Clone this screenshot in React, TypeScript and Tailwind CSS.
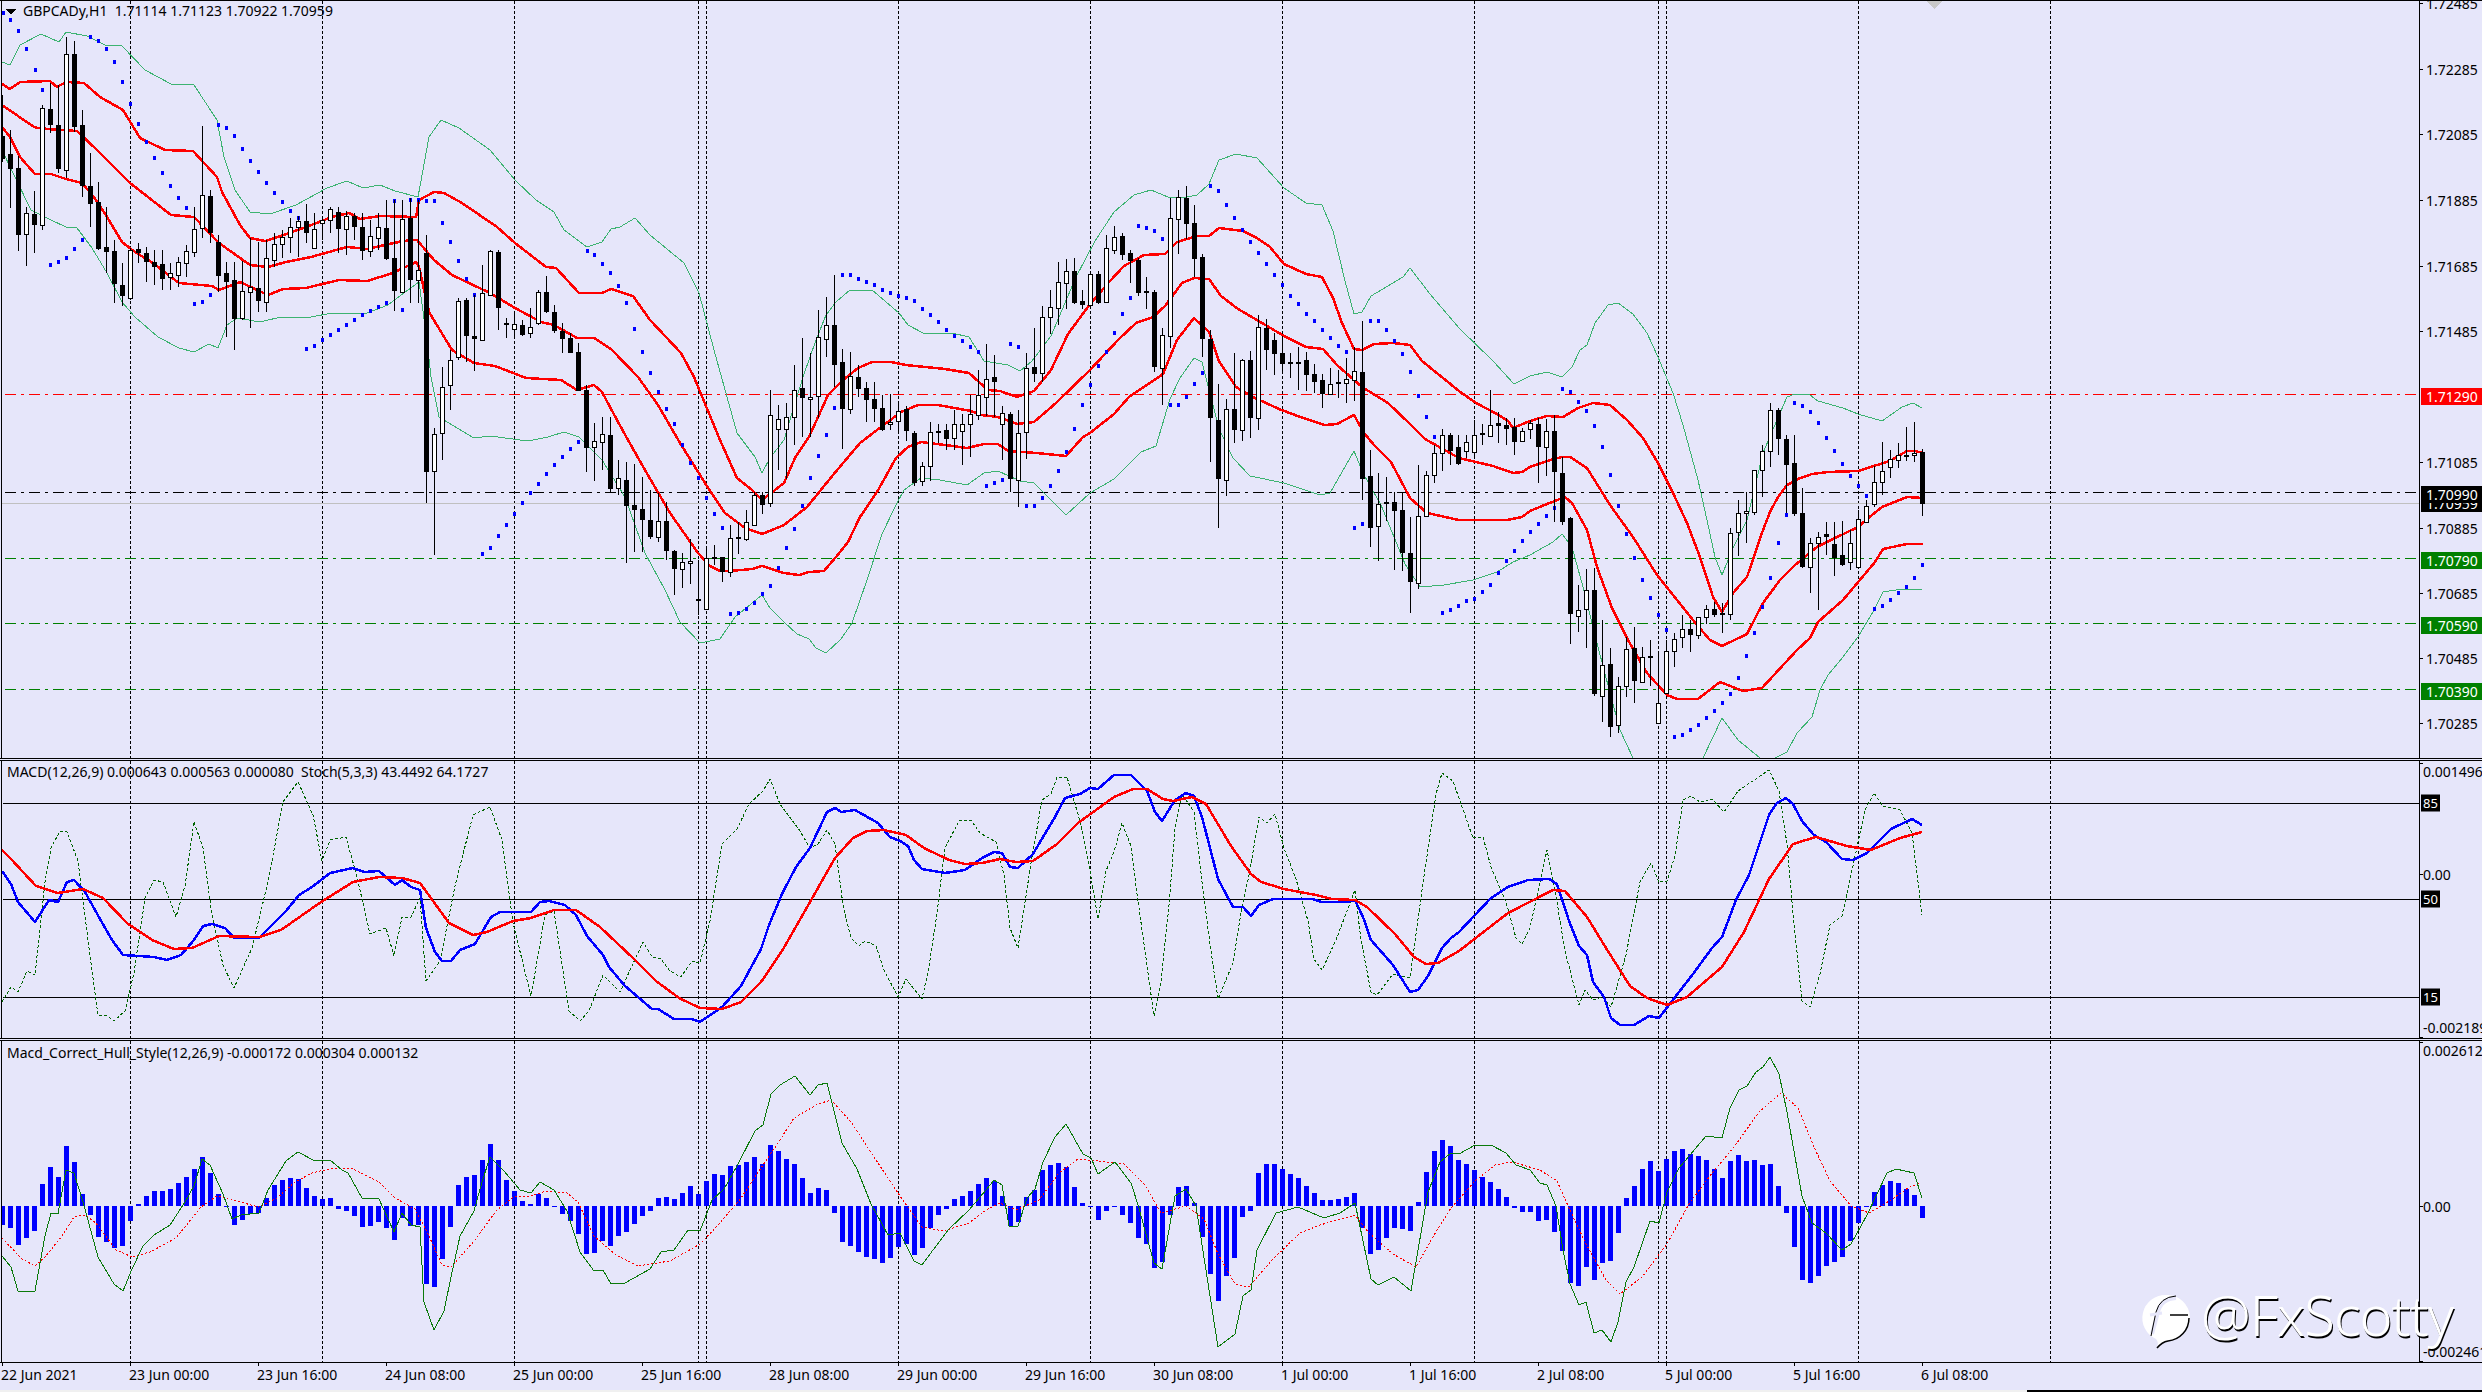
import React from "react";

// [high, bodyTop, bodyBottom, low, bull]
const C: number[][] = [
[95,136,159,162,0],[130,154,169,208,0],[156,168,235,251,0],[207,213,234,266,1],[191,214,225,253,0],[105,108,225,230,1],[83,109,125,133,0],[85,125,169,173,0],[37,54,170,178,1],[41,54,127,132,0],
[110,125,186,197,0],[153,186,204,227,0],[182,202,249,250,0],[207,247,252,273,0],[240,251,284,303,0],[263,285,296,306,0],[248,250,298,300,1],[243,249,253,263,0],[247,253,262,282,0],[250,262,267,285,0],
[250,264,279,290,0],[263,273,277,290,1],[257,262,275,287,1],[245,251,263,277,1],[207,229,252,257,1],[126,195,228,238,1],[190,196,233,243,0],[235,242,276,292,0],[262,273,282,337,0],[262,280,319,350,0],
[261,291,318,320,1],[238,287,292,328,1],[242,288,301,312,0],[240,258,302,312,1],[233,244,260,267,1],[230,237,244,258,1],[218,227,237,253,1],[216,221,227,257,1],[204,221,233,243,0],[213,229,248,248,1],
[217,220,223,240,1],[207,209,220,233,1],[207,212,229,253,0],[211,216,229,255,1],[213,216,227,240,0],[213,227,251,260,0],[220,236,251,257,1],[213,227,238,250,1],[200,228,259,260,0],[200,258,291,311,0],
[200,219,292,293,1],[198,218,280,303,0],[200,270,280,303,1],[235,253,472,503,0],[428,434,471,555,1],[367,387,433,460,1],[350,360,385,410,1],[298,301,357,360,1],[298,300,336,362,0],[295,336,339,371,0],
[265,293,340,340,1],[250,251,295,295,1],[250,252,308,330,0],[318,323,325,338,0],[312,324,329,337,1],[320,325,335,336,0],[308,327,333,338,1],[290,292,323,325,1],[276,292,312,313,0],[305,312,331,333,0],
[323,331,339,353,0],[333,338,353,353,0],[343,352,391,391,0],[385,390,448,472,0],[423,441,447,481,1],[417,434,442,470,1],[417,435,489,493,0],[460,478,488,495,1],[462,480,506,563,0],[464,505,510,552,0],
[477,509,520,552,0],[490,520,537,539,0],[493,521,537,542,1],[502,521,551,560,0],[550,551,569,595,0],[553,562,569,588,1],[539,561,562,584,1],[560,599,600,615,0],[546,558,609,609,1],[545,557,558,565,0],
[557,557,572,582,0],[525,538,572,577,1],[522,537,538,554,0],[510,522,539,541,1],[492,495,525,525,1],[492,495,505,514,0],[390,415,503,507,1],[405,419,429,470,1],[403,417,429,479,1],[365,390,417,445,1],
[338,388,398,437,0],[353,397,398,437,1],[310,337,396,418,1],[297,325,339,357,1],[275,325,365,387,0],[349,362,409,449,0],[352,376,409,414,1],[365,377,389,397,0],[382,388,400,422,0],[382,399,409,422,0],
[395,408,430,431,0],[394,422,424,430,1],[403,411,421,431,1],[406,409,431,441,0],[431,433,483,486,0],[462,466,481,486,1],[422,432,466,481,1],[424,431,432,443,0],[424,430,439,450,0],[410,424,438,450,1],
[414,424,431,465,1],[395,414,424,457,1],[370,395,415,420,1],[344,379,397,416,1],[355,377,382,417,0],[406,413,424,460,1],[412,414,479,492,0],[410,433,480,507,1],[353,368,432,459,1],[328,367,374,382,0],
[306,317,373,382,1],[290,307,317,334,1],[262,282,308,325,1],[259,271,283,309,1],[258,271,303,304,0],[290,301,305,309,0],[271,274,305,306,1],[271,274,303,304,0],[235,248,302,303,1],[226,237,250,254,1],
[233,236,255,260,0],[250,253,261,283,0],[258,260,293,296,0],[277,291,293,309,0],[290,292,367,372,0],[328,335,368,405,1],[198,218,336,348,1],[190,197,219,254,1],[186,198,224,239,0],[205,223,259,277,0],
[254,257,339,357,0],[330,339,418,462,0],[384,420,479,528,0],[399,409,480,496,1],[353,409,430,443,0],[359,360,430,441,1],[351,360,418,438,0],[315,327,418,430,1],[319,328,350,370,0],[333,340,354,375,0],
[336,353,364,374,0],[353,362,363,378,0],[347,362,364,390,0],[352,360,375,391,0],[364,374,382,393,0],[374,380,394,408,0],[368,384,394,395,1],[370,382,383,398,0],[358,379,383,403,1],[347,371,380,401,1],
[321,372,479,500,0],[450,476,528,547,0],[473,504,526,561,1],[477,502,503,521,0],[492,502,511,570,0],[492,510,553,571,0],[517,553,582,613,0],[465,516,583,589,1],[471,475,516,517,1],[445,453,475,483,1],
[429,435,453,471,1],[433,435,451,465,0],[435,447,464,465,0],[435,442,451,458,1],[420,435,452,458,1],[424,433,435,445,0],[390,425,436,437,1],[412,423,426,443,0],[418,425,429,445,0],[418,427,442,455,0],
[428,431,441,442,1],[420,423,429,439,1],[418,424,447,483,0],[419,431,447,476,1],[415,431,472,522,0],[457,473,522,525,0],[517,518,614,644,0],[585,610,616,632,1],[569,590,609,648,1],[568,590,694,696,0],
[620,665,696,722,1],[648,664,727,737,0],[677,686,725,733,1],[637,649,686,697,1],[627,648,681,703,0],[647,657,682,683,1],[640,656,658,686,0],[653,703,723,724,1],[640,651,693,694,1],[633,639,651,667,1],
[615,629,637,648,1],[620,629,635,652,0],[617,617,635,639,1],[605,609,617,624,1],[602,609,615,617,0],[603,613,615,633,0],[528,533,614,620,1],[500,513,532,556,1],[492,511,513,543,1],[470,470,512,515,1],
[445,451,470,497,1],[403,410,451,467,1],[408,410,439,455,0],[435,439,465,513,0],[435,463,514,516,0],[488,513,567,568,0],[538,543,567,593,1],[532,537,543,610,1],[522,534,537,555,0],[522,544,558,576,0],
[521,555,565,566,0],[530,543,562,570,1],[510,519,567,568,1],[500,506,522,523,1],[466,482,504,507,1],[442,471,482,495,1],[450,459,467,478,1],[443,455,460,468,1],[427,455,457,461,0],[422,453,455,462,1],
[449,452,504,516,0],
];

const HIST: number[] = [
19,22,39,32,25,-22,-39,-29,-60,-44,-12,9,31,36,42,40,15,-2,-10,-15,-15,-17,-23,-29,-37,-49,-33,-12,1,19,
14,8,7,-8,-21,-26,-28,-27,-18,-10,-7,-8,3,5,10,21,20,16,22,34,12,20,19,78,81,53,21,-21,-29,-31,
-46,-62,-46,-26,-15,-5,-2,-12,-8,1,8,15,28,48,47,35,40,30,26,18,10,5,-8,-9,-7,-13,-20,-12,-25,-32,
-31,-40,-41,-44,-49,-42,-61,-55,-47,-42,-28,-13,-18,-16,7,36,40,46,51,53,57,52,41,38,49,42,22,9,3,-7,
-10,-15,-22,-28,-25,-10,20,16,-9,-16,-36,-41,-43,-39,-19,-3,0,14,5,1,9,17,32,38,62,56,9,-19,-20,-3,
31,68,95,70,52,11,5,-33,-42,-42,-37,-32,-28,-20,-13,-6,-6,-7,-9,-13,22,48,44,32,22,23,25,-4,-34,-55,
-66,-60,-46,-42,-36,-29,-24,-17,-9,2,6,6,15,14,26,45,77,80,61,74,57,55,27,-8,-20,-37,-45,-35,-47,-55,
-57,-52,-50,-46,-37,-28,-45,-51,-45,-46,-41,-42,-20,7,41,74,77,70,60,56,51,35,17,0,-14,-21,-25,-23,-17,-11,
12,
];

const SAR = "3,13 10,20 18,31 26,49 35,70 42,90 50,265 58,262 66,258 74,249 82,240 90,37 98,41 106,49 114,62 122,82 130,104 138,124 146,142 154,158 162,173 170,186 178,198 186,208 194,304 202,302 210,295 218,125 226,128 234,136 242,149 250,161 258,172 266,183 274,193 282,202 290,211 298,218 306,349 314,346 322,340 330,335 338,330 346,325 354,320 362,315 370,311 378,307 386,303 394,201 402,310 410,200 418,200 426,201 434,201 442,223 450,242 458,261 466,279 474,295 482,554 490,548 498,536 506,525 514,514 522,503 530,493 538,484 546,474 554,465 562,457 570,449 578,442 587,251 594,255 602,264 610,273 618,286 626,303 634,329 642,352 650,373 658,392 666,409 674,424 682,445 690,463 698,478 706,498 714,514 722,528 730,614 738,613 746,609 754,603 762,594 770,586 778,568 786,548 794,529 802,506 810,478 818,456 826,435 834,408 842,275 850,275 858,279 866,282 874,285 882,290 890,293 898,296 906,298 914,301 922,309 930,315 938,322 946,330 954,336 962,341 970,347 978,352 986,486 994,483 1002,480 1010,344 1018,347 1026,506 1034,506 1042,498 1050,486 1058,471 1066,452 1074,429 1082,405 1090,385 1098,366 1106,352 1114,333 1122,314 1130,298 1138,226 1146,228 1154,231 1162,239 1170,405 1178,405 1186,397 1194,384 1202,373 1210,186 1218,191 1226,205 1234,218 1242,230 1250,242 1258,253 1266,264 1274,275 1282,285 1290,296 1298,304 1306,314 1314,321 1322,330 1330,338 1338,346 1346,352 1354,528 1362,524 1370,321 1378,321 1386,330 1394,341 1402,354 1410,372 1418,396 1426,417 1434,437 1442,613 1450,610 1458,606 1466,601 1474,599 1482,592 1490,585 1498,573 1506,561 1514,551 1522,541 1530,532 1538,524 1546,516 1554,508 1562,389 1570,392 1578,402 1586,411 1594,426 1602,447 1610,475 1618,506 1626,534 1634,558 1642,580 1650,598 1658,615 1666,630 1674,737 1682,735 1690,730 1698,725 1706,718 1714,711 1722,703 1730,694 1738,678 1746,656 1754,633 1762,607 1770,578 1778,543 1786,515 1794,403 1802,406 1810,412 1818,423 1826,438 1834,451 1842,464 1850,476 1858,486 1866,496 1874,609 1882,606 1890,600 1898,593 1906,587 1914,578 1922,565";

const RED_UP = "2,84 10,89 20,82 50,81 57,87 66,82 84,83 100,97 123,110 140,138 165,150 193,151 217,177 222,192 240,225 250,238 265,241 275,238 306,227 332,217 349,213 360,219 380,216 416,217 419,200 434,192 444,193 462,203 497,227 515,243 546,267 556,268 579,293 602,293 611,289 633,296 650,320 681,353 694,377 720,440 737,478 752,490 762,500 784,483 795,458 809,437 828,395 843,380 858,368 872,362 891,362 906,365 945,369 969,373 979,382 988,390 1000,391 1017,397 1034,391 1051,370 1068,334 1090,304 1110,281 1124,266 1144,255 1165,254 1177,242 1197,236 1209,236 1219,228 1243,231 1257,238 1270,247 1284,264 1306,274 1322,277 1333,298 1342,323 1354,349 1362,350 1374,344 1393,343 1410,345 1422,361 1459,391 1476,403 1497,414 1508,421 1513,428 1530,421 1547,416 1563,417 1578,408 1593,403 1610,405 1627,420 1643,438 1658,463 1673,493 1687,523 1700,557 1713,597 1722,612 1733,593 1747,577 1763,530 1770,512 1778,497 1787,485 1798,479 1812,474 1828,472 1858,471 1877,465 1890,461 1907,451 1915,451 1923,453";
const RED_MID = "2,105 34,127 38,128 59,130 77,131 97,150 130,183 171,215 194,217 219,243 250,265 268,267 286,262 311,257 347,247 367,249 403,241 417,240 434,260 452,275 490,293 515,308 541,322 554,325 577,338 594,338 612,350 638,377 658,405 680,443 705,483 725,513 745,528 762,534 772,530 784,525 807,507 833,475 860,443 877,430 901,412 918,405 938,405 971,411 981,415 998,417 1017,424 1034,422 1056,403 1090,370 1119,339 1136,323 1153,317 1165,306 1182,283 1194,278 1209,279 1221,296 1238,309 1257,320 1284,336 1306,347 1323,349 1337,365 1362,387 1388,403 1410,424 1425,439 1459,458 1493,466 1513,473 1522,472 1530,467 1547,461 1562,457 1570,457 1587,468 1610,505 1633,537 1657,575 1677,600 1697,625 1710,640 1722,646 1747,634 1763,603 1780,580 1795,565 1817,547 1833,539 1858,527 1872,515 1882,507 1907,497 1923,498";
const RED_LOW = "2,127 10,137 20,157 35,174 51,174 66,179 82,183 94,197 107,217 122,242 135,252 153,263 179,283 212,286 219,290 240,282 268,295 283,289 306,288 339,280 367,281 393,273 416,262 419,267 429,312 452,350 474,363 495,366 526,378 561,380 577,390 594,385 602,392 617,420 628,440 645,470 670,513 698,553 710,566 720,571 730,571 752,569 762,566 784,573 799,575 809,572 824,571 836,557 848,542 860,517 877,492 896,458 908,447 921,442 945,445 967,448 984,444 998,444 1008,451 1037,453 1066,456 1083,437 1090,433 1114,414 1129,397 1144,387 1163,374 1177,340 1194,318 1209,332 1219,361 1236,387 1253,397 1279,409 1303,418 1325,425 1337,424 1354,415 1364,433 1374,445 1391,462 1410,498 1427,513 1459,520 1507,520 1522,517 1530,511 1547,504 1565,497 1572,503 1587,530 1597,567 1612,608 1628,640 1647,673 1667,695 1677,699 1698,699 1720,682 1743,691 1762,688 1785,663 1797,650 1810,638 1818,622 1843,600 1875,562 1883,549 1907,544 1923,544";
const GRN_UP = "2,62 10,65 20,45 41,34 59,42 66,32 87,36 105,45 122,46 145,70 171,84 194,85 217,120 224,157 235,190 250,212 270,214 296,205 327,188 347,181 363,188 380,185 395,191 418,197 429,137 441,120 459,128 490,150 515,180 536,200 554,212 564,230 587,247 602,242 611,229 620,227 635,218 650,235 684,263 699,293 714,350 737,433 755,457 762,473 770,458 784,440 795,403 804,374 816,340 826,315 836,302 850,290 872,290 899,313 908,325 923,333 952,333 969,337 984,361 1008,365 1020,371 1032,361 1051,336 1076,277 1095,241 1114,212 1134,195 1151,190 1168,197 1182,198 1197,195 1209,184 1219,160 1236,154 1257,158 1284,188 1306,203 1322,205 1333,231 1345,281 1354,314 1362,312 1371,296 1403,277 1410,268 1430,294 1459,328 1493,361 1514,384 1530,376 1547,372 1562,377 1572,367 1580,350 1587,345 1595,323 1608,305 1618,303 1633,314 1647,333 1658,357 1673,393 1683,425 1698,480 1707,520 1715,557 1722,575 1733,548 1747,520 1763,453 1777,420 1787,397 1795,394 1810,395 1818,401 1843,408 1858,414 1882,421 1902,407 1913,403 1922,408";
const GRN_LOW = "2,150 13,173 31,210 51,220 66,227 77,228 92,248 107,273 122,302 135,317 158,337 179,348 194,352 209,344 218,348 227,325 237,318 260,322 281,317 306,318 332,313 367,313 388,305 408,290 419,282 426,333 431,377 439,417 452,425 474,438 490,436 528,441 548,437 564,432 579,437 602,460 625,497 645,553 665,590 680,622 700,643 720,639 735,617 762,595 770,608 784,622 797,634 809,639 816,648 826,653 841,639 852,623 867,580 882,534 896,505 904,490 921,478 940,480 967,485 984,473 998,471 1020,481 1034,483 1066,515 1090,493 1114,479 1141,452 1156,446 1170,399 1180,378 1194,358 1202,362 1219,429 1233,458 1250,476 1284,483 1320,495 1330,493 1354,451 1364,475 1381,505 1405,564 1420,587 1444,585 1473,580 1497,572 1513,562 1530,555 1553,542 1562,534 1572,547 1583,587 1597,643 1610,693 1620,730 1633,758 1650,790 1690,790 1703,758 1722,718 1738,740 1760,758 1768,765 1775,758 1787,752 1797,733 1812,717 1820,690 1828,675 1843,657 1858,637 1873,612 1883,592 1902,589 1922,589";

const M_BLUE = "2,871 11,884 18,902 35,922 49,900 58,902 67,882 74,880 85,892 100,919 112,940 123,955 154,957 167,960 181,955 194,940 203,926 212,924 225,928 234,938 259,938 286,911 299,895 312,887 330,873 353,868 364,872 379,871 395,885 402,880 411,887 420,890 426,928 435,952 442,961 451,961 460,950 475,944 491,917 500,912 531,912 540,902 549,901 565,905 576,915 587,936 603,955 609,967 625,986 652,1009 658,1009 674,1019 692,1019 700,1022 722,1007 741,986 761,949 769,925 782,894 796,867 810,848 827,812 835,808 841,812 855,810 878,823 890,837 900,841 908,846 914,860 922,869 945,873 965,870 982,858 994,852 1002,853 1010,867 1018,868 1033,854 1043,837 1055,817 1065,798 1080,794 1090,788 1098,789 1114,775 1131,775 1147,791 1155,812 1162,821 1175,800 1186,793 1194,796 1202,817 1218,879 1233,907 1243,907 1251,916 1259,905 1273,899 1312,899 1322,902 1347,902 1355,900 1363,917 1371,940 1393,965 1410,992 1418,990 1428,976 1442,948 1451,938 1459,932 1491,898 1508,887 1528,880 1549,879 1557,884 1569,921 1579,946 1587,955 1593,982 1604,997 1611,1018 1620,1025 1634,1025 1649,1016 1659,1018 1679,992 1693,974 1712,948 1722,937 1736,900 1749,875 1769,815 1777,803 1786,798 1793,804 1802,821 1814,835 1826,842 1842,859 1853,860 1867,853 1891,829 1912,819 1922,825";
const M_RED = "2,850 11,859 36,886 58,893 83,889 103,898 127,923 152,940 174,949 192,948 219,936 259,937 281,930 321,902 353,882 379,877 402,878 420,883 449,923 473,935 487,932 513,921 531,918 554,910 576,910 600,927 634,959 656,981 679,998 700,1008 722,1009 741,1002 761,982 782,951 810,902 835,858 853,838 867,831 884,830 906,835 924,848 949,860 965,864 982,863 1000,859 1016,862 1033,861 1057,844 1078,823 1114,797 1133,789 1147,789 1163,799 1173,801 1192,797 1206,804 1231,846 1251,874 1261,882 1284,889 1316,895 1332,899 1355,900 1367,907 1395,934 1414,957 1426,964 1438,963 1459,951 1508,913 1553,890 1565,891 1587,917 1606,948 1630,986 1647,998 1667,1005 1687,997 1722,967 1744,932 1769,879 1793,844 1816,837 1847,846 1871,850 1900,838 1922,832";
const M_STO = "2,1002 11,987 18,992 27,971 35,975 45,882 51,848 60,831 67,832 78,861 89,948 98,1015 107,1016 114,1021 125,1011 134,973 145,898 154,880 163,882 176,917 185,886 194,822 203,848 212,915 223,965 234,988 252,948 268,882 283,802 298,782 313,815 322,861 330,840 346,837 357,877 370,934 386,928 394,956 402,917 411,917 420,898 426,981 440,961 455,886 473,815 490,807 502,840 513,923 531,996 545,915 554,911 569,1011 580,1021 589,1011 603,975 620,992 643,942 652,957 661,959 670,971 681,977 692,961 700,963 710,921 722,844 737,829 749,804 763,791 770,779 780,804 800,831 810,848 818,844 827,830 835,844 843,905 851,938 859,946 865,941 876,946 884,970 898,997 906,979 922,999 929,967 937,913 945,848 959,821 971,820 980,833 996,842 1004,875 1010,928 1018,948 1031,863 1042,800 1051,794 1057,777 1067,777 1080,821 1090,871 1098,919 1106,871 1114,852 1122,823 1131,846 1137,894 1145,951 1154,1016 1161,982 1169,905 1175,829 1182,794 1194,812 1202,882 1210,944 1218,999 1233,963 1241,913 1249,875 1259,817 1267,823 1275,814 1284,848 1296,879 1308,921 1314,959 1322,970 1336,940 1355,890 1361,940 1371,992 1377,995 1393,974 1410,978 1422,890 1436,794 1442,773 1453,781 1473,838 1483,837 1491,867 1506,902 1516,938 1522,944 1530,928 1547,850 1555,890 1565,951 1579,1005 1585,990 1593,1000 1602,997 1611,1007 1626,955 1640,882 1651,863 1659,882 1667,881 1675,856 1683,800 1691,796 1700,802 1712,799 1724,812 1738,791 1769,770 1779,791 1787,844 1793,913 1802,1001 1810,1007 1820,974 1830,925 1842,916 1851,875 1865,810 1874,793 1883,806 1900,810 1912,833 1922,915";

const H_GRN = "2,1256 11,1267 18,1291 27,1292 35,1291 45,1236 51,1213 58,1214 66,1170 74,1173 83,1202 98,1257 114,1284 123,1291 132,1269 143,1246 154,1235 170,1225 185,1202 194,1186 202,1159 210,1165 223,1194 232,1219 241,1215 259,1213 268,1190 286,1161 298,1152 315,1161 330,1160 342,1170 348,1173 362,1198 379,1199 394,1232 402,1213 411,1225 420,1227 424,1302 434,1330 444,1311 451,1277 460,1236 474,1211 482,1182 490,1157 504,1171 520,1190 531,1193 540,1182 554,1190 567,1211 580,1252 594,1271 603,1270 611,1284 625,1283 650,1269 661,1252 674,1250 688,1230 700,1231 712,1200 724,1189 737,1166 755,1131 763,1125 771,1094 780,1085 795,1076 810,1095 818,1085 827,1083 842,1143 857,1169 871,1204 888,1235 900,1233 914,1261 922,1265 933,1250 949,1229 969,1210 986,1190 994,1180 1002,1185 1009,1226 1018,1226 1027,1198 1035,1189 1043,1162 1055,1137 1066,1124 1083,1154 1091,1158 1098,1174 1115,1162 1131,1183 1139,1208 1147,1238 1154,1263 1162,1269 1175,1196 1186,1189 1196,1206 1210,1296 1218,1347 1235,1334 1243,1296 1251,1290 1257,1250 1276,1213 1298,1207 1324,1218 1340,1213 1355,1203 1371,1279 1378,1285 1394,1277 1411,1291 1428,1192 1440,1162 1451,1153 1459,1154 1475,1145 1491,1145 1506,1153 1516,1165 1530,1170 1540,1183 1547,1185 1556,1206 1563,1250 1570,1284 1579,1305 1586,1302 1594,1333 1602,1330 1611,1342 1618,1322 1626,1282 1634,1267 1650,1221 1659,1223 1667,1192 1679,1168 1706,1136 1722,1138 1730,1108 1739,1090 1747,1086 1756,1072 1763,1067 1770,1057 1779,1074 1787,1112 1802,1196 1812,1223 1826,1233 1842,1250 1851,1244 1867,1215 1887,1173 1896,1169 1914,1173 1922,1198";
const H_RED = "2,1238 22,1259 35,1266 45,1257 62,1236 74,1217 85,1215 96,1223 116,1250 132,1257 150,1252 176,1238 201,1207 217,1196 232,1200 259,1207 277,1198 295,1182 312,1173 333,1168 353,1169 379,1182 395,1198 415,1209 429,1236 442,1265 451,1267 475,1240 496,1211 513,1197 529,1196 547,1191 567,1193 578,1202 594,1236 616,1255 638,1266 670,1261 700,1244 720,1223 741,1198 761,1168 778,1143 794,1118 818,1104 831,1100 851,1122 876,1160 900,1196 922,1227 943,1231 969,1223 986,1210 1000,1203 1016,1210 1039,1200 1059,1173 1078,1159 1098,1161 1124,1164 1145,1185 1161,1213 1186,1206 1204,1219 1218,1254 1235,1284 1249,1287 1271,1261 1300,1233 1320,1225 1355,1215 1369,1233 1393,1254 1416,1267 1434,1235 1451,1208 1475,1181 1495,1165 1512,1162 1540,1170 1557,1181 1569,1208 1585,1242 1606,1280 1620,1294 1642,1277 1667,1244 1689,1204 1712,1173 1734,1147 1759,1112 1781,1093 1798,1108 1814,1147 1830,1181 1851,1206 1869,1213 1891,1200 1908,1188 1920,1183";

const SEPS = [130, 322, 514, 698, 706, 898, 1090, 1282, 1474, 1658, 1666, 1858, 2050];

const PRICE_TICKS: [number, string][] = [
  [3, "1.72485"], [69, "1.72285"], [134, "1.72085"], [200, "1.71885"], [266, "1.71685"], [331, "1.71485"],
  [462, "1.71085"], [528, "1.70885"], [593, "1.70685"], [658, "1.70485"], [723, "1.70285"],
];

const PRICE_TAGS: [number, string, string][] = [
  [388, "1.71290", "bg-[#ff0000]"],
  [495, "1.70959", "bg-black"],
  [486, "1.70990", "bg-black"],
  [552, "1.70790", "bg-[#008000]"],
  [617, "1.70590", "bg-[#008000]"],
  [683, "1.70390", "bg-[#008000]"],
];

const TIMES = ["22 Jun 2021", "23 Jun 00:00", "23 Jun 16:00", "24 Jun 08:00", "25 Jun 00:00", "25 Jun 16:00", "28 Jun 08:00", "29 Jun 00:00", "29 Jun 16:00", "30 Jun 08:00", "1 Jul 00:00", "1 Jul 16:00", "2 Jul 08:00", "5 Jul 00:00", "5 Jul 16:00", "6 Jul 08:00"];

const DASHDOT = "11 5 3 5";

const mono = (s: string) => {
  let last = -1;
  return s
    .split(" ")
    .filter((p) => {
      const x = Number(p.split(",")[0]);
      if (x <= last) return false;
      last = x;
      return true;
    })
    .join(" ");
};

function Line({ d, color, w = 1, dash }: { d: string; color: string; w?: number; dash?: string }) {
  return <polyline points={mono(d)} fill="none" stroke={color} strokeWidth={w} strokeDasharray={dash} strokeLinejoin="round" />;
}

function Seps({ y0, y1 }: { y0: number; y1: number }) {
  return (
    <>
      {SEPS.map((x) => (
        <line key={x} x1={x + 0.5} x2={x + 0.5} y1={y0} y2={y1} stroke="#000" strokeDasharray="3 2" />
      ))}
    </>
  );
}

function HLine({ y, color, x0 = 5, dash }: { y: number; color: string; x0?: number; dash?: string }) {
  return <line x1={x0} x2={2419} y1={y + 0.5} y2={y + 0.5} stroke={color} strokeDasharray={dash} />;
}

function Candles() {
  return (
    <>
      {C.map(([hi, top, bot, lo, bull], i) => {
        const x = 2 + 8 * i;
        const thin = bot - top <= 2;
        return (
          <g key={i}>
            <rect x={x} y={hi} width={1} height={lo - hi} fill="#000" />
            {bull && !thin ? (
              <rect x={x - 1.5} y={top + 0.5} width={4} height={bot - top} fill="#fff" stroke="#000" />
            ) : bull ? (
              <rect x={x - 1.5} y={top + 0.5} width={4} height={2} fill="#fff" stroke="#000" />
            ) : (
              <rect x={x - 2} y={top} width={5} height={Math.max(bot - top, 2)} fill="#000" />
            )}
          </g>
        );
      })}
    </>
  );
}

function Tick({ y }: { y: number }) {
  return <span className="absolute left-0 h-px w-[3px] bg-black" style={{ top: y }} />;
}

function AxisText({ y, text, left = 3 }: { y: number; text: string; left?: number }) {
  return (
    <span className="absolute -translate-y-1/2 whitespace-pre text-[14px] leading-none text-black" style={{ top: y, left }}>
      {text}
    </span>
  );
}

function Level({ y, text, top }: { y: number; text: string; top: number }) {
  return (
    <span
      className="absolute left-px flex h-[17px] w-[19px] -translate-y-1/2 items-center justify-center bg-black text-[13px] leading-none text-white"
      style={{ top: y - top }}
    >
      {text}
    </span>
  );
}

function ChartBox({ y0, h, children }: { y0: number; h: number; children: React.ReactNode }) {
  return (
    <div className="relative ml-px w-[2419px] shrink-0 border-x border-black">
      <svg className="block h-full w-[2417px]" viewBox={`2 ${y0} 2417 ${h}`} shapeRendering="crispEdges">
        {children}
      </svg>
    </div>
  );
}

function Title({ text, left, top }: { text: string; left: number; top: number }) {
  return (
    <span className="absolute whitespace-pre text-[14px] leading-none text-black" style={{ left, top }}>
      {text}
    </span>
  );
}

export default function App() {
  const zero = 1206;
  return (
    <div className="relative flex h-[1392px] w-[2482px] flex-col overflow-hidden bg-[#e6e6fa] font-['Noto_Sans',sans-serif]">
      {/* main chart */}
      <div className="flex h-[759px] shrink-0 border-y border-black">
        <ChartBox y0={1} h={757}>
          <Seps y0={1} y1={758} />
          <HLine y={394} color="#ff0000" dash={DASHDOT} />
          <HLine y={492} color="#000" dash={DASHDOT} />
          <HLine y={503} color="#c0c0c0" x0={2} />
          <HLine y={558} color="#008000" dash={DASHDOT} />
          <HLine y={623} color="#008000" dash={DASHDOT} />
          <HLine y={689} color="#008000" dash={DASHDOT} />
          <Line d={GRN_UP} color="#3cb371" />
          <Line d={GRN_LOW} color="#3cb371" />
          <Line d={RED_UP} color="#ff0000" w={2.5} />
          <Line d={RED_MID} color="#ff0000" w={2.5} />
          <Line d={RED_LOW} color="#ff0000" w={2.5} />
          {SAR.split(" ").map((p) => {
            const [x, y] = p.split(",").map(Number);
            return <rect key={p} x={x - 1} y={y - 2} width={3} height={4} fill="#0000ff" />;
          })}
          <Candles />
          <polygon points="6,9 16,9 11,15" fill="#000" />
          <polygon points="1927,1 1942,1 1934.5,9" fill="#c8c8c8" />
        </ChartBox>
        <Title text="GBPCADy,H1  1.71114 1.71123 1.70922 1.70959" left={23} top={4} />
        <div className="relative flex-1">
          {PRICE_TICKS.map(([y, t]) => (
            <React.Fragment key={t}>
              <Tick y={y - 1} />
              <AxisText y={y} text={t} left={6} />
            </React.Fragment>
          ))}
          {PRICE_TAGS.map(([y, t, bg]) => (
            <span key={t} className={`absolute left-px flex h-[17px] w-[62px] items-center pl-[5px] text-[14px] leading-none text-white ${bg}`} style={{ top: y - 1 }}>
              {t}
            </span>
          ))}
        </div>
      </div>

      {/* MACD + Stochastic */}
      <div className="mt-px flex h-[279px] shrink-0 border-y border-black">
        <ChartBox y0={761} h={277}>
          <Seps y0={761} y1={1038} />
          <HLine y={803} color="#000" x0={3} />
          <HLine y={899} color="#000" x0={3} />
          <HLine y={997} color="#000" x0={3} />
          <Line d={M_STO} color="#006400" dash="3 2" />
          <Line d={M_BLUE} color="#0000ff" w={2.5} />
          <Line d={M_RED} color="#ff0000" w={2.5} />
        </ChartBox>
        <Title text="MACD(12,26,9) 0.000643 0.000563 0.000080  Stoch(5,3,3) 43.4492 64.1727" left={7} top={765} />
        <div className="relative flex-1">
          <Tick y={2} />
          <Tick y={113} />
          <Tick y={276} />
          <AxisText y={11} text="0.001496" />
          <AxisText y={114} text="0.00" />
          <AxisText y={267} text="-0.002189" />
          <Level y={803} text="85" top={761} />
          <Level y={899} text="50" top={761} />
          <Level y={997} text="15" top={761} />
        </div>
      </div>

      {/* Hull MACD */}
      <div className="mt-px flex h-[323px] shrink-0 border-y border-black">
        <ChartBox y0={1041} h={321}>
          <Seps y0={1041} y1={1362} />
          {HIST.map((v, i) => (
            <rect key={i} x={2 + 8 * i - 2} y={v < 0 ? zero + v : zero} width={5} height={Math.max(Math.abs(v), 1)} fill="#0000ff" />
          ))}
          <Line d={H_RED} color="#ff0000" dash="2 2" />
          <Line d={H_GRN} color="#0b7a0b" />
        </ChartBox>
        <Title text="Macd_Correct_Hull_Style(12,26,9) -0.000172 0.000304 0.000132" left={7} top={1046} />
        <div className="relative flex-1">
          <Tick y={1} />
          <Tick y={165} />
          <Tick y={320} />
          <AxisText y={10} text="0.002612" />
          <AxisText y={166} text="0.00" />
          <AxisText y={311} text="-0.002461" />
        </div>
      </div>

      {/* time axis */}
      <div className="flex h-[27px] shrink-0 pl-[2px]">
        {TIMES.map((t) => (
          <div key={t} className="flex w-[128px] shrink-0 flex-col items-start">
            <span className="h-[3px] w-px bg-black" />
            <span className="mt-[2px] -ml-px whitespace-pre text-[14px] leading-none text-black">{t}</span>
          </div>
        ))}
      </div>
      <div className="flex h-[2px] shrink-0">
        <div className="h-full w-[2027px] bg-[#f0f0f0]" />
        <div className="h-full flex-1 bg-black" />
      </div>

      {/* watermark */}
      <svg className="absolute left-[2136px] top-[1288px] h-[66px] w-[60px]" viewBox="2136 1288 60 66">
        <path d="M2166 1295 a23 23 0 0 1 2 46 q-6 1 -11 7 q2 -6 -1 -9 a23 23 0 0 1 10 -44 z" fill="#fff" />
        <path d="M2189 1318 a23 23 0 0 1 -21 23 q-6 1 -11 7" fill="none" stroke="#000" strokeWidth="1.5" />
        <path d="M2152 1334 L2158 1312 Q2161 1299 2176 1298" fill="none" stroke="#e6e6fa" strokeWidth="4" />
        <path d="M2151 1336 L2156 1312 Q2160 1297 2176 1296" fill="none" stroke="#000" strokeWidth="1" />
        <path d="M2150 1315 L2162 1313" fill="none" stroke="#e6e6fa" strokeWidth="3" />
        <path d="M2170 1315 L2188 1315" fill="none" stroke="#000" strokeWidth="1.5" />
      </svg>
      <span className="absolute left-[2201px] top-[1278px] whitespace-pre text-[56px] font-light leading-[72px] tracking-[-1px] text-white [text-shadow:1px_2px_0_#000]">
        @FxScotty
      </span>
    </div>
  );
}
